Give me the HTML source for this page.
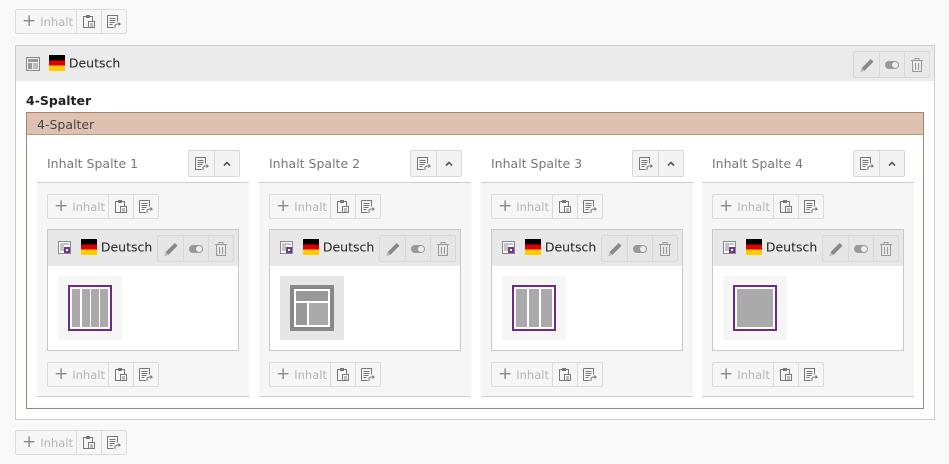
<!DOCTYPE html>
<html><head><meta charset="utf-8"><style>
*{box-sizing:border-box;margin:0;padding:0}
body{width:949px;height:464px;background:#f9f9f9;font-family:"DejaVu Sans","Liberation Sans",sans-serif;font-size:12px;color:#212121;position:relative;overflow:hidden}
.a{position:absolute}
.tb{position:absolute;height:25px;display:flex;border:1px solid #dcdcdc;border-radius:2px;background:#f6f6f6}
.tb>div{height:23px;display:flex;align-items:center;justify-content:center;border-left:1px solid #dcdcdc;width:25px}
.tb>div:first-child{border-left:none;width:60px;color:#b5b5b5;font-size:11.5px;justify-content:flex-start;padding-left:6px}
.tb>div:first-child b{font-weight:normal;color:#888;font-size:17px;margin-right:4px;line-height:1}
.flag{display:inline-block;width:16px;height:16px;background:linear-gradient(#000 0 33%,#d00 33% 66%,#fc0 66%);vertical-align:middle}
.grp{position:absolute;display:flex;border:1px solid #d8d8d8;border-radius:2px;background:#e6e6e6}
.grp>div{width:25px;height:25px;display:flex;align-items:center;justify-content:center;border-left:1px solid #d8d8d8}
.grp>div:first-child{border-left:none}
.col{position:absolute;top:140px;width:212px;height:258px}
.col .hd{position:absolute;left:10px;top:16px;color:#777;font-size:12.5px}
.col .line{position:absolute;left:0;right:0;top:42px;height:1px;background:#ccc}
.col .bd{position:absolute;left:0;right:0;top:43px;height:214px;background:#f6f6f6;border-bottom:1px solid #ccc}
.el{position:absolute;left:10px;top:89px;width:192px;height:122px;border:1px solid #c8c8c8;background:#fff}
.el .eh{position:absolute;left:0;right:0;top:0;height:36px;background:#e8e8e8}
.thumb{position:absolute;left:10px;top:46px;width:64px;height:64px;background:#f6f6f6;display:flex;align-items:center;justify-content:center}
</style></head><body>

<svg width="0" height="0" style="position:absolute"><defs>
<g id="paste"><rect x="2.5" y="2.5" width="9" height="11" fill="none" stroke="#777"/><rect x="5" y="1" width="4" height="3" fill="#777"/><rect x="7.5" y="7.5" width="6" height="6" fill="#fff" stroke="#777"/><path d="M9 10h3M9 12h3" stroke="#777"/></g>
<g id="ref"><path d="M1.5 1.5h10v6M1.5 1.5v12h6" fill="none" stroke="#777"/><path d="M3.5 4.5h6M3.5 6.5h6M3.5 8.5h5M3.5 10.5h3" stroke="#777"/><path d="M9 14l0-3 2-1h3l-1.5-1.5M14 10l-1.5 1.5" stroke="#777" fill="none"/></g>
<g id="pen"><path d="M1.5 15l1.2-4 9-9 2.8 2.8-9 9z" fill="#888"/><path d="M1.5 15l1.2-4 2.8 2.8z" fill="#bbb"/></g>
<g id="tog"><rect x="1" y="4" width="14" height="8" rx="4" fill="#999"/><circle cx="11" cy="8" r="3" fill="#eee"/></g>
<g id="trash"><path d="M2 3.5h12M6 3.5v-2h4v2M3.5 3.5v11h9v-11M6.5 6v7M9.5 6v7" fill="none" stroke="#999"/></g>
<g id="ce"><rect x="1.5" y="1.5" width="12" height="12" fill="#fff" stroke="#888"/><path d="M3 4h9M3 6h4M3 8h4M3 10h4" stroke="#888"/><rect x="7" y="7" width="6" height="6" fill="#6d3a8e"/><rect x="9" y="9" width="2" height="2" fill="#fff"/></g>
<g id="chev"><path d="M5 9.5l3-3 3 3" fill="none" stroke="#555" stroke-width="1.6"/></g>
</defs></svg>

<div class="tb" style="left:15px;top:9px"><div><b>+</b>Inhalt</div><div><svg width="16" height="16"><use href="#paste"/></svg></div><div><svg width="16" height="16"><use href="#ref"/></svg></div></div>

<div class="a" style="left:15px;top:45px;width:920px;height:375px;border:1px solid #ccc;background:#fff"></div>
<div class="a" style="left:16px;top:46px;width:918px;height:35px;background:#ebebeb"></div>
<svg class="a" style="left:25px;top:56px" width="16" height="16"><rect x="1.5" y="1.5" width="13" height="13" fill="#eee" stroke="#888"/><rect x="3" y="3" width="10" height="3" fill="#999"/><rect x="3" y="7" width="4" height="6" fill="#999"/><rect x="8" y="7" width="5" height="6" fill="#bbb"/></svg>
<div class="a" style="left:49px;top:55px"><span class="flag"></span> <span style="vertical-align:middle;font-size:12.5px">Deutsch</span></div>
<div class="grp" style="left:853px;top:51px;background:#e9e9e9"><div><svg width="16" height="16"><use href="#pen"/></svg></div><div><svg width="16" height="16"><use href="#tog"/></svg></div><div><svg width="16" height="16"><use href="#trash"/></svg></div></div>

<div class="a" style="left:26px;top:93px;font-weight:bold;font-size:12.5px">4-Spalter</div>
<div class="a" style="left:26px;top:112px;width:898px;height:297px;border:1px solid #a8856a;background:#fff"></div>
<div class="a" style="left:27px;top:113px;width:896px;height:22px;background:#dfc1b1;border-bottom:1px solid #b99880"></div>
<div class="a" style="left:37px;top:117px;color:#444;font-size:12.5px">4-Spalter</div>

<div class="col" style="left:37px">
<div class="hd">Inhalt Spalte 1</div>
<div class="grp" style="left:151px;top:10px;background:#f3f3f3"><div><svg width="16" height="16"><use href="#ref"/></svg></div><div><svg width="16" height="16"><use href="#chev"/></svg></div></div>
<div class="line"></div><div class="bd"></div>
<div class="tb" style="left:10px;top:54px"><div><b>+</b>Inhalt</div><div><svg width="16" height="16"><use href="#paste"/></svg></div><div><svg width="16" height="16"><use href="#ref"/></svg></div></div>
<div class="el"><div class="eh"></div>
<svg class="a" style="left:9px;top:10px" width="16" height="16"><use href="#ce"/></svg>
<div class="a" style="left:33px;top:9px"><span class="flag"></span> <span style="vertical-align:middle;font-size:12.5px">Deutsch</span></div>
<div class="grp" style="left:109px;top:5px"><div><svg width="16" height="16"><use href="#pen"/></svg></div><div><svg width="16" height="16"><use href="#tog"/></svg></div><div><svg width="16" height="16"><use href="#trash"/></svg></div></div>
<div class="thumb"><svg width="44" height="46"><rect x="1" y="1" width="42" height="44" fill="#fff" stroke="#6d2a8c" stroke-width="2"/><rect x="4" y="4" width="8" height="38" fill="#aaa"/><rect x="14" y="4" width="8" height="38" fill="#aaa"/><rect x="23" y="4" width="8" height="38" fill="#aaa"/><rect x="32" y="4" width="8" height="38" fill="#aaa"/></svg></div>
</div>
<div class="tb" style="left:10px;top:222px"><div><b>+</b>Inhalt</div><div><svg width="16" height="16"><use href="#paste"/></svg></div><div><svg width="16" height="16"><use href="#ref"/></svg></div></div>
</div>

<div class="col" style="left:259px">
<div class="hd">Inhalt Spalte 2</div>
<div class="grp" style="left:151px;top:10px;background:#f3f3f3"><div><svg width="16" height="16"><use href="#ref"/></svg></div><div><svg width="16" height="16"><use href="#chev"/></svg></div></div>
<div class="line"></div><div class="bd"></div>
<div class="tb" style="left:10px;top:54px"><div><b>+</b>Inhalt</div><div><svg width="16" height="16"><use href="#paste"/></svg></div><div><svg width="16" height="16"><use href="#ref"/></svg></div></div>
<div class="el"><div class="eh"></div>
<svg class="a" style="left:9px;top:10px" width="16" height="16"><use href="#ce"/></svg>
<div class="a" style="left:33px;top:9px"><span class="flag"></span> <span style="vertical-align:middle;font-size:12.5px">Deutsch</span></div>
<div class="grp" style="left:109px;top:5px"><div><svg width="16" height="16"><use href="#pen"/></svg></div><div><svg width="16" height="16"><use href="#tog"/></svg></div><div><svg width="16" height="16"><use href="#trash"/></svg></div></div>
<div class="thumb" style="background:#e6e6e6"><svg width="44" height="46"><rect x="0" y="0" width="44" height="46" fill="#888"/><rect x="4" y="4" width="36" height="38" fill="#fff"/><rect x="6" y="6" width="32" height="10" fill="#999"/><rect x="6" y="18" width="11" height="22" fill="#999"/><rect x="19" y="18" width="19" height="22" fill="#aaa"/></svg></div>
</div>
<div class="tb" style="left:10px;top:222px"><div><b>+</b>Inhalt</div><div><svg width="16" height="16"><use href="#paste"/></svg></div><div><svg width="16" height="16"><use href="#ref"/></svg></div></div>
</div>

<div class="col" style="left:481px">
<div class="hd">Inhalt Spalte 3</div>
<div class="grp" style="left:151px;top:10px;background:#f3f3f3"><div><svg width="16" height="16"><use href="#ref"/></svg></div><div><svg width="16" height="16"><use href="#chev"/></svg></div></div>
<div class="line"></div><div class="bd"></div>
<div class="tb" style="left:10px;top:54px"><div><b>+</b>Inhalt</div><div><svg width="16" height="16"><use href="#paste"/></svg></div><div><svg width="16" height="16"><use href="#ref"/></svg></div></div>
<div class="el"><div class="eh"></div>
<svg class="a" style="left:9px;top:10px" width="16" height="16"><use href="#ce"/></svg>
<div class="a" style="left:33px;top:9px"><span class="flag"></span> <span style="vertical-align:middle;font-size:12.5px">Deutsch</span></div>
<div class="grp" style="left:109px;top:5px"><div><svg width="16" height="16"><use href="#pen"/></svg></div><div><svg width="16" height="16"><use href="#tog"/></svg></div><div><svg width="16" height="16"><use href="#trash"/></svg></div></div>
<div class="thumb"><svg width="44" height="46"><rect x="1" y="1" width="42" height="44" fill="#fff" stroke="#6d2a8c" stroke-width="2"/><rect x="4" y="4" width="11" height="38" fill="#aaa"/><rect x="17" y="4" width="10" height="38" fill="#aaa"/><rect x="29" y="4" width="11" height="38" fill="#aaa"/></svg></div>
</div>
<div class="tb" style="left:10px;top:222px"><div><b>+</b>Inhalt</div><div><svg width="16" height="16"><use href="#paste"/></svg></div><div><svg width="16" height="16"><use href="#ref"/></svg></div></div>
</div>

<div class="col" style="left:702px">
<div class="hd">Inhalt Spalte 4</div>
<div class="grp" style="left:151px;top:10px;background:#f3f3f3"><div><svg width="16" height="16"><use href="#ref"/></svg></div><div><svg width="16" height="16"><use href="#chev"/></svg></div></div>
<div class="line"></div><div class="bd"></div>
<div class="tb" style="left:10px;top:54px"><div><b>+</b>Inhalt</div><div><svg width="16" height="16"><use href="#paste"/></svg></div><div><svg width="16" height="16"><use href="#ref"/></svg></div></div>
<div class="el"><div class="eh"></div>
<svg class="a" style="left:9px;top:10px" width="16" height="16"><use href="#ce"/></svg>
<div class="a" style="left:33px;top:9px"><span class="flag"></span> <span style="vertical-align:middle;font-size:12.5px">Deutsch</span></div>
<div class="grp" style="left:109px;top:5px"><div><svg width="16" height="16"><use href="#pen"/></svg></div><div><svg width="16" height="16"><use href="#tog"/></svg></div><div><svg width="16" height="16"><use href="#trash"/></svg></div></div>
<div class="thumb"><svg width="44" height="46"><rect x="1" y="1" width="42" height="44" fill="#fff" stroke="#6d2a8c" stroke-width="2"/><rect x="4" y="4" width="36" height="38" fill="#aaa"/></svg></div>
</div>
<div class="tb" style="left:10px;top:222px"><div><b>+</b>Inhalt</div><div><svg width="16" height="16"><use href="#paste"/></svg></div><div><svg width="16" height="16"><use href="#ref"/></svg></div></div>
</div>

<div class="tb" style="left:15px;top:430px"><div><b>+</b>Inhalt</div><div><svg width="16" height="16"><use href="#paste"/></svg></div><div><svg width="16" height="16"><use href="#ref"/></svg></div></div>

</body></html>
